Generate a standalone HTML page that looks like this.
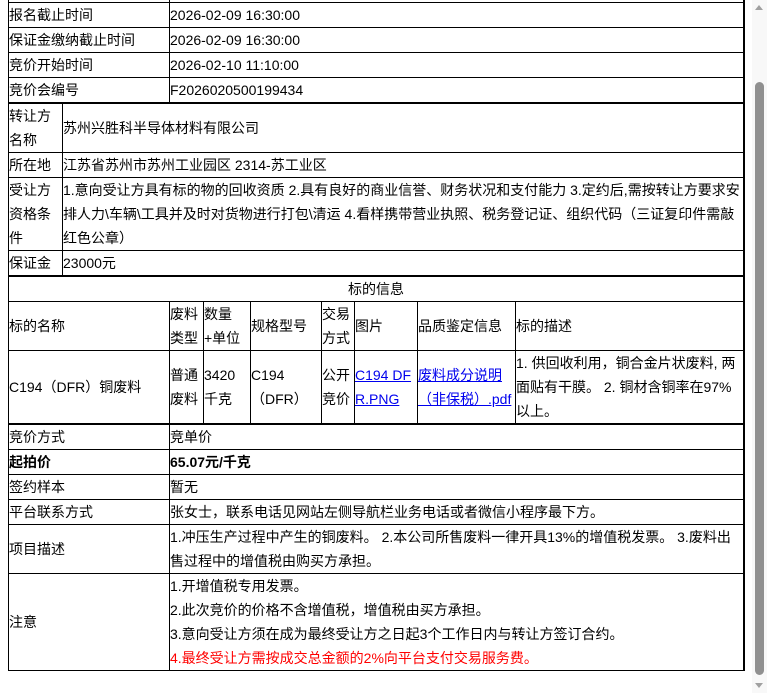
<!DOCTYPE html>
<html><head><meta charset="utf-8"><style>
*{margin:0;padding:0;box-sizing:border-box}
body{width:767px;height:693px;overflow:hidden;background:#fff;position:relative;font-family:"Liberation Sans","Noto Sans CJK SC",sans-serif;font-size:14px;color:#000}
.h{position:absolute;left:8px;width:736px;height:1px;background:#000}
.v{position:absolute;width:1px;background:#000}
.c{position:absolute;display:flex;align-items:center;padding-left:1px;line-height:24px;white-space:nowrap}
.c div{width:100%}
a{color:#00e;text-decoration:underline}
b{font-weight:bold}
.sb{position:absolute;left:752px;top:0;width:15px;height:693px;background:#f8f8f8}
.th{position:absolute;left:755px;top:82px;width:9px;height:593px;background:#909090;border-radius:5px}
</style></head><body>
<div class="h" style="top:2px"></div>
<div class="h" style="top:27px"></div>
<div class="h" style="top:52px"></div>
<div class="h" style="top:77px"></div>
<div class="h" style="top:102px;height:2px"></div>
<div class="h" style="top:152px"></div>
<div class="h" style="top:177px"></div>
<div class="h" style="top:250px"></div>
<div class="h" style="top:275px;height:2px"></div>
<div class="h" style="top:301px"></div>
<div class="h" style="top:350px"></div>
<div class="h" style="top:423px;height:2px"></div>
<div class="h" style="top:449px"></div>
<div class="h" style="top:474px"></div>
<div class="h" style="top:499px"></div>
<div class="h" style="top:524px"></div>
<div class="h" style="top:573px"></div>
<div class="h" style="top:670px"></div>
<div class="v" style="left:8px;top:0;height:671px"></div>
<div class="v" style="left:743px;top:0;height:671px;width:2px"></div>
<div class="v" style="left:169px;top:0;height:103px"></div>
<div class="v" style="left:62px;top:103px;height:173px"></div>
<div class="v" style="left:169px;top:301px;height:370px"></div>
<div class="v" style="left:203px;top:301px;height:123px"></div>
<div class="v" style="left:250px;top:301px;height:123px"></div>
<div class="v" style="left:321px;top:301px;height:123px"></div>
<div class="v" style="left:354px;top:301px;height:123px"></div>
<div class="v" style="left:417px;top:301px;height:123px"></div>
<div class="v" style="left:515px;top:301px;height:123px"></div>

<div class="c" style="left:8px;top:2px;width:161px;height:25px">报名截止时间</div>
<div class="c" style="left:169px;top:2px;width:574px;height:25px">2026-02-09 16:30:00</div>
<div class="c" style="left:8px;top:27px;width:161px;height:25px">保证金缴纳截止时间</div>
<div class="c" style="left:169px;top:27px;width:574px;height:25px">2026-02-09 16:30:00</div>
<div class="c" style="left:8px;top:52px;width:161px;height:25px">竞价开始时间</div>
<div class="c" style="left:169px;top:52px;width:574px;height:25px">2026-02-10 11:10:00</div>
<div class="c" style="left:8px;top:77px;width:161px;height:25px">竞价会编号</div>
<div class="c" style="left:169px;top:77px;width:574px;height:25px">F2026020500199434</div>

<div class="c" style="left:8px;top:104px;width:54px;height:48px"><div>转让方<br>名称</div></div>
<div class="c" style="left:62px;top:104px;width:681px;height:48px">苏州兴胜科半导体材料有限公司</div>
<div class="c" style="left:8px;top:152px;width:54px;height:25px">所在地</div>
<div class="c" style="left:62px;top:152px;width:681px;height:25px">江苏省苏州市苏州工业园区 2314-苏工业区</div>
<div class="c" style="left:8px;top:177px;width:54px;height:73px"><div>受让方<br>资格条<br>件</div></div>
<div class="c" style="left:62px;top:177px;width:681px;height:73px"><div>1.意向受让方具有标的物的回收资质 2.具有良好的商业信誉、财务状况和支付能力 3.定约后,需按转让方要求安<br>排人力\车辆\工具并及时对货物进行打包\清运 4.看样携带营业执照、税务登记证、组织代码（三证复印件需敲<br>红色公章）</div></div>
<div class="c" style="left:8px;top:250px;width:54px;height:25px">保证金</div>
<div class="c" style="left:62px;top:250px;width:681px;height:25px">23000元</div>

<div class="c" style="left:8px;top:277px;width:735px;height:24px;justify-content:center"><div style="text-align:center">标的信息</div></div>
<div class="c" style="left:8px;top:301px;width:161px;height:49px">标的名称</div>
<div class="c" style="left:169px;top:301px;width:34px;height:49px"><div>废料<br>类型</div></div>
<div class="c" style="left:203px;top:301px;width:47px;height:49px"><div>数量<br>+单位</div></div>
<div class="c" style="left:250px;top:301px;width:71px;height:49px">规格型号</div>
<div class="c" style="left:321px;top:301px;width:33px;height:49px"><div>交易<br>方式</div></div>
<div class="c" style="left:354px;top:301px;width:63px;height:49px">图片</div>
<div class="c" style="left:417px;top:301px;width:98px;height:49px">品质鉴定信息</div>
<div class="c" style="left:515px;top:301px;width:228px;height:49px">标的描述</div>

<div class="c" style="left:8px;top:350px;width:161px;height:73px">C194（DFR）铜废料</div>
<div class="c" style="left:169px;top:350px;width:34px;height:73px"><div>普通<br>废料</div></div>
<div class="c" style="left:203px;top:350px;width:47px;height:73px"><div>3420<br>千克</div></div>
<div class="c" style="left:250px;top:350px;width:71px;height:73px"><div>C194<br>（DFR）</div></div>
<div class="c" style="left:321px;top:350px;width:33px;height:73px"><div>公开<br>竞价</div></div>
<div class="c" style="left:354px;top:350px;width:63px;height:73px;overflow:hidden"><div><a>C194 DF<br>R.PNG</a></div></div>
<div class="c" style="left:417px;top:350px;width:98px;height:73px"><div><a>废料成分说明<br>（非保税）.pdf</a></div></div>
<div class="c" style="left:515px;top:350px;width:228px;height:73px"><div>1. 供回收利用，铜合金片状废料, 两<br>面贴有干膜。 2. 铜材含铜率在97%<br>以上。</div></div>

<div class="c" style="left:8px;top:425px;width:161px;height:24px">竞价方式</div>
<div class="c" style="left:169px;top:425px;width:574px;height:24px">竞单价</div>
<div class="c" style="left:8px;top:449px;width:161px;height:25px"><b>起拍价</b></div>
<div class="c" style="left:169px;top:449px;width:574px;height:25px"><b>65.07元/千克</b></div>
<div class="c" style="left:8px;top:474px;width:161px;height:25px">签约样本</div>
<div class="c" style="left:169px;top:474px;width:574px;height:25px">暂无</div>
<div class="c" style="left:8px;top:499px;width:161px;height:25px">平台联系方式</div>
<div class="c" style="left:169px;top:499px;width:574px;height:25px">张女士，联系电话见网站左侧导航栏业务电话或者微信小程序最下方。</div>
<div class="c" style="left:8px;top:524px;width:161px;height:49px">项目描述</div>
<div class="c" style="left:169px;top:524px;width:574px;height:49px"><div>1.冲压生产过程中产生的铜废料。 2.本公司所售废料一律开具13%的增值税发票。 3.废料出<br>售过程中的增值税由购买方承担。</div></div>
<div class="c" style="left:8px;top:573px;width:161px;height:97px">注意</div>
<div class="c" style="left:169px;top:573px;width:574px;height:97px"><div>1.开增值税专用发票。<br>2.此次竞价的价格不含增值税，增值税由买方承担。<br>3.意向受让方须在成为最终受让方之日起3个工作日内与转让方签订合约。<br><span style="color:#f00">4.最终受让方需按成交总金额的2%向平台支付交易服务费。</span></div></div>

<div class="sb"></div>
<div class="th"></div>
<div style="position:absolute;left:755px;top:5px;width:0;height:0;border-left:4px solid transparent;border-right:4px solid transparent;border-bottom:5px solid #a0a0a0"></div>
<div style="position:absolute;left:755px;top:683px;width:0;height:0;border-left:4px solid transparent;border-right:4px solid transparent;border-top:5px solid #a0a0a0"></div>
</body></html>
